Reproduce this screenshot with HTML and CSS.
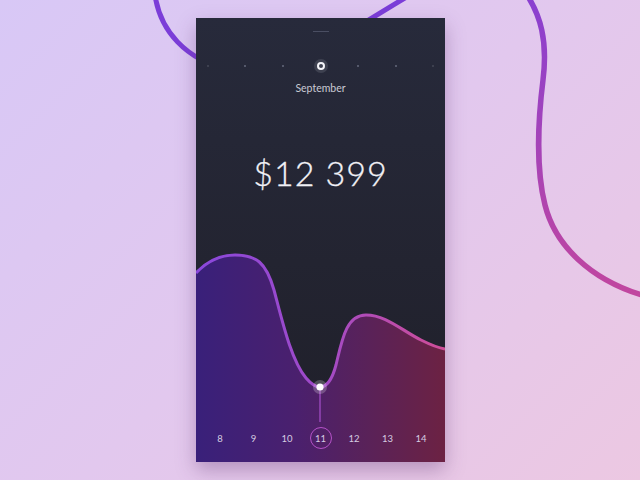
FILE: index.html
```html
<!DOCTYPE html>
<html>
<head>
<meta charset="utf-8">
<link rel="stylesheet" href="styles.css">
</head>
<body>
<svg class="backdrop" width="640" height="480" viewBox="0 0 640 480">
  <defs>
    <linearGradient id="bgline" gradientUnits="userSpaceOnUse" x1="0" y1="0" x2="0" y2="300">
      <stop offset="0" stop-color="#8a40d0"/>
      <stop offset="1" stop-color="#c2469e"/>
    </linearGradient>
  </defs>
  <path d="M155,-5 C160,30 185,60 230,70 C300,70 350,30 410,-5" fill="none" stroke="#7b3dd8" stroke-width="5" stroke-linecap="round"/>
  <path d="M527,-5 C540,15 548,40 543,80 C538,120 536,170 545,205 C555,245 590,280 645,296" fill="none" stroke="url(#bgline)" stroke-width="5.5" stroke-linecap="round"/>
</svg>

<main class="phone">
  <div class="handle"></div>
  <div class="months">
    <span class="dot faint"></span>
    <span class="dot"></span>
    <span class="dot"></span>
    <span class="dot current"></span>
    <span class="dot"></span>
    <span class="dot"></span>
    <span class="dot faint"></span>
  </div>
  <div class="month">September</div>
  <div class="amount">$12 399</div>

  <section class="chart">
    <svg class="chart-bg" viewBox="0 0 249 212" preserveAspectRatio="none">
      <defs>
        <linearGradient id="area" x1="0" y1="0" x2="1" y2="0">
          <stop offset="0" stop-color="#39207a"/>
          <stop offset="0.4" stop-color="#4a206e"/>
          <stop offset="0.7" stop-color="#5a2258"/>
          <stop offset="1" stop-color="#6c2243"/>
        </linearGradient>
        <linearGradient id="line" x1="0" y1="0" x2="1" y2="0">
          <stop offset="0" stop-color="#8a48dc"/>
          <stop offset="0.5" stop-color="#a04ac8"/>
          <stop offset="1" stop-color="#cf4e98"/>
        </linearGradient>
      </defs>
      <path d="M0,23 C12,10 25,5 39,5 C60,5 70,12 78,40 C86,70 95,110 110,128 C116,135 120,137 124,137 C130,137 136,130 140,115 C146,90 150,65 170,65 C190,65 205,80 225,90 C235,95 242,98 249,99 L249,212 L0,212 Z" fill="url(#area)"/>
      <path d="M0,23 C12,10 25,5 39,5 C60,5 70,12 78,40 C86,70 95,110 110,128 C116,135 120,137 124,137 C130,137 136,130 140,115 C146,90 150,65 170,65 C190,65 205,80 225,90 C235,95 242,98 249,99" fill="none" stroke="url(#line)" stroke-width="3"/>
      <line x1="124" y1="140" x2="124" y2="172" stroke="#a04cc4" stroke-width="1.3"/>
      <circle cx="124" cy="137" r="7" fill="rgba(255,255,255,0.22)"/>
      <circle cx="124" cy="137" r="3.6" fill="#ffffff"/>
    </svg>
    <div class="days">
      <span class="day">8</span>
      <span class="day">9</span>
      <span class="day">10</span>
      <span class="day selected">11</span>
      <span class="day">12</span>
      <span class="day">13</span>
      <span class="day">14</span>
    </div>
  </section>
</main>
</body>
</html>
```

FILE: styles.css
```css
html, body {
  margin: 0;
  padding: 0;
}

body {
  width: 640px;
  height: 480px;
  overflow: hidden;
  position: relative;
  background: linear-gradient(135deg, #d8c8f6 0%, #e2c8ee 50%, #ecc8e2 100%);
  display: flex;
  justify-content: center;
  align-items: center;
  font-family: Lato, "Open Sans", sans-serif;
}

.backdrop {
  position: absolute;
  left: 0;
  top: 0;
}

.phone {
  position: relative;
  width: 249px;
  height: 444px;
  margin-left: 1px;
  background: linear-gradient(180deg, #272a3b 0%, #232431 55%, #1f1f29 100%);
  box-shadow: 0 8px 18px rgba(90, 50, 110, 0.35);
  display: flex;
  flex-direction: column;
  align-items: center;
  overflow: hidden;
}

.handle {
  margin-top: 13px;
  width: 16px;
  height: 1px;
  background: #4a4e62;
}

.months {
  margin-top: 27px;
  height: 14px;
  display: flex;
  gap: 23.67px;
  align-items: center;
}

.dot {
  width: 14px;
  height: 14px;
  display: flex;
  align-items: center;
  justify-content: center;
}

.dot::before {
  content: "";
  width: 2px;
  height: 2px;
  border-radius: 50%;
  background: #666a7c;
}

.dot.faint::before {
  background: #464957;
}

.dot.current {
  border-radius: 50%;
  background: #3e4150;
}

.dot.current::before {
  width: 4px;
  height: 4px;
  border: 2px solid #f4f4f8;
  background: transparent;
}

.month {
  margin-top: 8px;
  font-size: 10.5px;
  line-height: 14px;
  color: #c9c9d3;
}

.amount {
  margin-top: 58px;
  font-size: 34px;
  line-height: 40px;
  font-weight: 300;
  letter-spacing: 1px;
  color: #f1f1f6;
  -webkit-text-stroke: 0.3px #f1f1f6;
}

.chart {
  margin-top: auto;
  position: relative;
  width: 249px;
  height: 212px;
  box-sizing: border-box;
  padding-top: 177px;
}

.chart-bg {
  position: absolute;
  left: 0;
  top: 0;
  width: 249px;
  height: 212px;
}

.days {
  position: relative;
  display: flex;
  justify-content: center;
  gap: 11.5px;
}

.day {
  width: 22px;
  height: 22px;
  box-sizing: border-box;
  display: flex;
  align-items: center;
  justify-content: center;
  font-size: 9.5px;
  color: #d6cde2;
}

.day.selected {
  border: 1.5px solid #b552c8;
  border-radius: 50%;
}
```
